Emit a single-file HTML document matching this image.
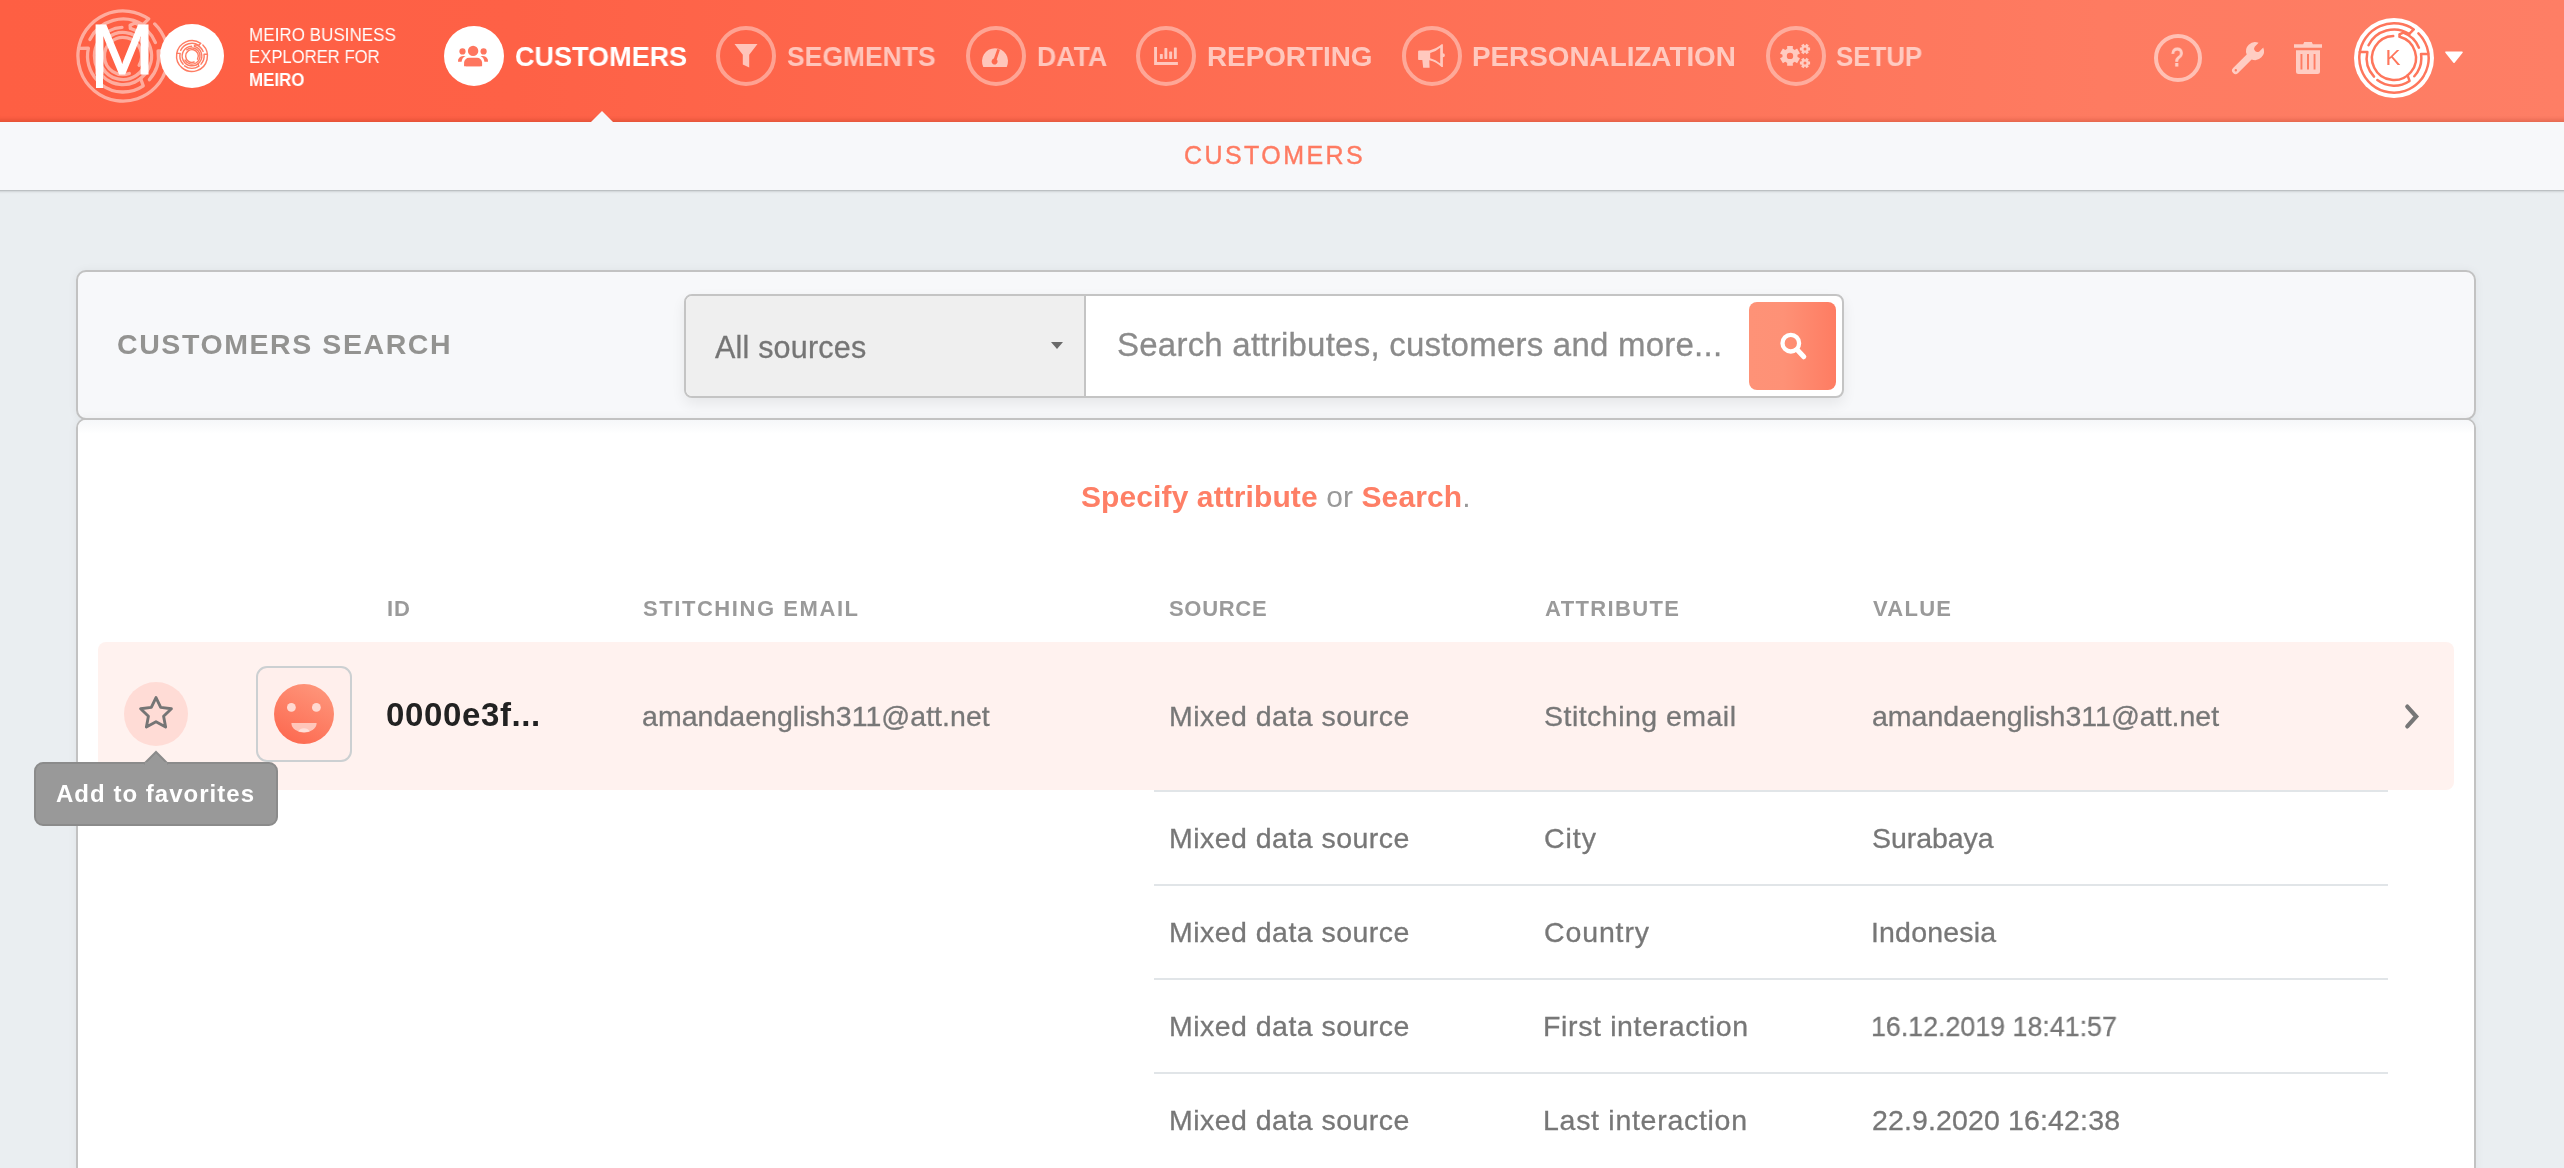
<!DOCTYPE html>
<html lang="en">
<head>
<meta charset="utf-8">
<title>Meiro Business Explorer - Customers</title>
<style>
*{box-sizing:border-box;margin:0;padding:0}
html,body{width:2564px;height:1168px;overflow:hidden}
body{background:#eaeef1;font-family:"Liberation Sans",Arial,sans-serif;color:#777;position:relative}
.abs{position:absolute}
.t{position:absolute;white-space:pre;line-height:1;will-change:transform}
/* header */
#hdr{position:absolute;left:0;top:0;width:2564px;height:122px;background:linear-gradient(90deg,#fe5f43 0%,#fe6146 20%,#fe7b61 82%,#fe7e65 100%);box-shadow:inset 0 -6px 4px -4px rgba(130,30,0,.24)}
#sub{position:absolute;left:-12px;top:122px;width:2588px;height:68px;background:#f7f8fa;box-shadow:0 1px 3px rgba(0,0,0,.2),0 1px 1px rgba(0,0,0,.08)}
.nav{font-weight:700;font-size:27.5px;color:rgba(255,255,255,.62)}
.nav.on{color:#fff}
.sx{transform-origin:0 0}
/* panels */
#sp{position:absolute;left:76px;top:270px;width:2400px;height:150px;background:#f7f8fa;border:2px solid #c2c2c2;border-radius:10px;box-shadow:0 0 10px rgba(0,0,0,.05)}
#rp{position:absolute;left:76px;top:418px;width:2400px;height:800px;background:#fff;border:2px solid #c2c2c2;border-radius:10px;box-shadow:0 0 10px rgba(0,0,0,.05)}
.hd{font-weight:700;font-size:22px;letter-spacing:1.6px;color:#999}
.cell{font-size:28.5px;color:#757575}
.sep{position:absolute;left:1076px;width:1234px;height:2px;background:#e1e5e8}
</style>
</head>
<body>
<div id="sub"><div class="t" style="left:1195.6px;top:20.54px;font-size:25px;letter-spacing:2.42px;color:#fe7b62;-webkit-text-stroke:.4px #fe7b62">CUSTOMERS</div></div>
<header id="hdr">
<!-- logo maze -->
<svg class="abs" style="left:73px;top:6.1px;opacity:.48" width="100" height="100" viewBox="-50 -50 100 100" fill="none" stroke="#fff" stroke-width="3.3" stroke-linecap="round" stroke-linejoin="round">
<path d="M31.72 -32.06 A45.10 45.10 0 1 1 25.67 -37.08 L19.90 -31.24"/>
<path d="M19.90 -31.24 A37.04 37.04 0 0 0 -33.12 -16.59"/>
<path d="M-44.45 -7.67 L-34.63 -7.74 A35.48 35.48 0 0 0 -25.95 24.20"/>
<path d="M44.45 -5.20 L35.10 -5.18 A35.48 35.48 0 0 1 26.41 23.70"/>
<path d="M-21.67 28.75 A36.00 36.00 0 0 0 20.24 29.78 L17.60 22.53"/>
<path d="M32.42 -13.43 A35.09 35.09 0 0 0 12.00 -32.98 L7.08 -30.65 L7.40 -27.62"/>
<path d="M7.40 -27.62 A28.59 28.59 0 1 1 -1.00 -28.58"/>
<path d="M-15.17 -18.08 A23.60 23.60 0 1 1 -20.44 11.80"/>
<path d="M6.36 17.48 A18.60 18.60 0 1 1 16.11 9.30"/>
</svg>
<div class="t sx" style="left:90.2px;top:14.85px;font-size:70px;color:#fff;transform:scaleX(1.1);-webkit-text-stroke:1.2px #fff">M</div>
<div class="abs" style="left:95.8px;top:60px;width:7.6px;height:28.2px;background:#fff"></div>
<div class="abs" style="left:160px;top:24px;width:64px;height:64px;border-radius:50%;background:#fff"></div>
<svg class="abs" style="left:172px;top:36px" width="40" height="40" viewBox="-58.4 -58.4 116.8 116.8" fill="none" stroke="#fe7d64" stroke-width="4.2" stroke-linecap="round" stroke-linejoin="round">
<path d="M31.72 -32.06 A45.10 45.10 0 1 1 25.67 -37.08 L19.90 -31.24"/>
<path d="M19.90 -31.24 A37.04 37.04 0 0 0 -33.12 -16.59"/>
<path d="M-44.45 -7.67 L-34.63 -7.74 A35.48 35.48 0 0 0 -25.95 24.20"/>
<path d="M44.45 -5.20 L35.10 -5.18 A35.48 35.48 0 0 1 26.41 23.70"/>
<path d="M-21.67 28.75 A36.00 36.00 0 0 0 20.24 29.78 L17.60 22.53"/>
<path d="M32.42 -13.43 A35.09 35.09 0 0 0 12.00 -32.98 L7.08 -30.65 L7.40 -27.62"/>
<path d="M7.40 -27.62 A28.59 28.59 0 1 1 -1.00 -28.58"/>
<path d="M-15.17 -18.08 A23.60 23.60 0 1 1 -20.44 11.80"/>
<path d="M6.36 17.48 A18.60 18.60 0 1 1 16.11 9.30"/>
</svg>
<div class="t sx" style="left:249.3px;top:26.4px;font-size:18.3px;color:#fff;transform:scaleX(.933)">MEIRO BUSINESS</div>
<div class="t sx" style="left:249.2px;top:48.4px;font-size:18.3px;color:#fff;transform:scaleX(.912)">EXPLORER FOR</div>
<div class="t sx" style="left:249.4px;top:70.7px;font-size:18.3px;font-weight:700;color:#fff;transform:scaleX(.924)">MEIRO</div>
<!-- nav -->
<svg class="abs" style="left:0;top:0" width="2564" height="122" viewBox="0 0 2564 122">
<g fill="none" stroke="rgba(255,255,255,.4)" stroke-width="4">
<circle cx="746" cy="55.9" r="28"/><circle cx="996" cy="55.9" r="28"/><circle cx="1166" cy="55.9" r="28"/><circle cx="1432" cy="55.9" r="28"/><circle cx="1796" cy="55.9" r="28"/>
</g>
<circle cx="2178" cy="58" r="22" fill="none" stroke="rgba(255,255,255,.52)" stroke-width="4"/>
<circle cx="474" cy="55.9" r="30" fill="#fff"/>
<!-- users -->
<g fill="#fe765f">
<circle cx="473.1" cy="50.9" r="5.2"/>
<path d="M464.1 66.3 V62.6 A5 5 0 0 1 469.1 57.8 H477.1 A5 5 0 0 1 482.1 62.6 V66.3 Z" />
<path d="M464.1 64.3 a2 2 0 0 0 2 2 h14 a2 2 0 0 0 2 -2z"/>
<circle cx="462.5" cy="51.4" r="3.1"/><circle cx="483.6" cy="51.4" r="3.1"/>
<path d="M458 61.8 A5.2 5.2 0 0 1 463 56 H465.6 A7 7 0 0 0 461.6 61.8 Z"/>
<path d="M488 61.8 A5.2 5.2 0 0 0 483 56 H480.4 A7 7 0 0 1 484.4 61.8 Z"/>
</g>
<g fill="rgba(255,255,255,.62)">
<!-- filter -->
<path d="M734.5 44 H757.5 L749.2 54.8 V67.6 L742.8 64.4 V54.8 Z"/>
<!-- tachometer -->
<path fill-rule="evenodd" d="M983.3 66.9 A13 13 0 1 1 1006.7 66.9 Z M997.3 48.9 L993.9 58.6 A3 3 0 1 0 996.7 59.4 L999.9 49.8 Z"/>
<!-- chart -->
<path d="M1154.1 47.1 H1157 V62.1 H1177.9 V65.1 H1154.1 Z"/>
<rect x="1159.9" y="53.9" width="2.9" height="5" rx=".6"/><rect x="1164.4" y="48.1" width="2.9" height="10.8" rx=".6"/><rect x="1169.2" y="51.6" width="2.9" height="7.3" rx=".6"/><rect x="1173.9" y="47.4" width="2.9" height="11.5" rx=".6"/>
<!-- bullhorn -->
<path fill-rule="evenodd" d="M1419.3 50.4 H1429.5 Q1436.5 48.8 1441.6 44.3 H1442.9 V53.2 A1.8 1.8 0 0 1 1442.9 57.2 V67 H1441.6 Q1436.5 61.8 1429.3 60.2 L1429.6 67.8 H1423.2 L1422.3 60.1 H1419.3 A1.2 1.2 0 0 1 1418.1 58.9 V51.6 A1.2 1.2 0 0 1 1419.3 50.4 Z M1430.2 53.1 V58.2 Q1435.8 59.6 1440.2 63.4 V47.7 Q1435.8 51.6 1430.2 53.1 Z"/>
<!-- cogs -->
<path fill-rule="evenodd" d="M1797.52 57.01 L1800.00 58.36 L1797.13 63.33 L1794.72 61.86 L1792.80 62.97 L1792.87 65.79 L1787.13 65.79 L1787.20 62.97 L1785.28 61.86 L1782.87 63.33 L1780.00 58.36 L1782.48 57.01 L1782.48 54.79 L1780.00 53.44 L1782.87 48.47 L1785.28 49.94 L1787.20 48.83 L1787.13 46.01 L1792.87 46.01 L1792.80 48.83 L1794.72 49.94 L1797.13 48.47 L1800.00 53.44 L1797.52 54.79Z M1786.80 55.90 a3.20 3.20 0 1 0 6.40 0 a3.20 3.20 0 1 0 -6.40 0Z"/>
<path fill-rule="evenodd" d="M1808.63 47.56 L1810.09 47.52 L1810.09 50.48 L1808.63 50.44 L1808.06 51.42 L1808.83 52.67 L1806.26 54.15 L1805.57 52.86 L1804.43 52.86 L1803.74 54.15 L1801.17 52.67 L1801.94 51.42 L1801.37 50.44 L1799.91 50.48 L1799.91 47.52 L1801.37 47.56 L1801.94 46.58 L1801.17 45.33 L1803.74 43.85 L1804.43 45.14 L1805.57 45.14 L1806.26 43.85 L1808.83 45.33 L1808.06 46.58Z M1803.50 49.00 a1.50 1.50 0 1 0 3.00 0 a1.50 1.50 0 1 0 -3.00 0Z"/>
<path fill-rule="evenodd" d="M1808.63 61.56 L1810.09 61.52 L1810.09 64.48 L1808.63 64.44 L1808.06 65.42 L1808.83 66.67 L1806.26 68.15 L1805.57 66.86 L1804.43 66.86 L1803.74 68.15 L1801.17 66.67 L1801.94 65.42 L1801.37 64.44 L1799.91 64.48 L1799.91 61.52 L1801.37 61.56 L1801.94 60.58 L1801.17 59.33 L1803.74 57.85 L1804.43 59.14 L1805.57 59.14 L1806.26 57.85 L1808.83 59.33 L1808.06 60.58Z M1803.50 63.00 a1.50 1.50 0 1 0 3.00 0 a1.50 1.50 0 1 0 -3.00 0Z"/>
<!-- wrench -->
<path fill-rule="evenodd" d="M2258.6 42.85 A9 9 0 0 0 2246.7 54.5 L2233.1 68 A3.5 3.5 0 0 0 2238.1 73 L2251.6 59.4 A9 9 0 0 0 2263.25 47.5 L2259.3 51.4 A3.3 3.3 0 0 1 2254.7 46.8 Z M2234.6 70.3 a1.2 1.2 0 1 0 2.4 0 a1.2 1.2 0 1 0 -2.4 0Z"/>
<!-- trash -->
<path fill-rule="evenodd" d="M2294 44.2 H2303.2 L2304.2 42.1 H2311.8 L2312.8 44.2 H2322 V47.7 H2294 Z M2296 50.2 H2320 V71.5 A2.5 2.5 0 0 1 2317.5 74 H2298.5 A2.5 2.5 0 0 1 2296 71.5 Z M2300.5 54 V69.6 H2302.4 V54 Z M2307 54 V69.6 H2309 V54 Z M2313.6 54 V69.6 H2315.5 V54Z"/>
</g>
</svg>
<div class="t nav on sx" id="n1" style="left:514.5px;top:42.7px;transform:scaleX(0.983)">CUSTOMERS</div>
<div class="t nav sx" id="n2" style="left:786.5px;top:42.7px;transform:scaleX(0.963)">SEGMENTS</div>
<div class="t nav sx" id="n3" style="left:1037.0px;top:42.7px;transform:scaleX(0.97)">DATA</div>
<div class="t nav sx" id="n4" style="left:1206.6px;top:42.7px;transform:scaleX(1.012)">REPORTING</div>
<div class="t nav sx" id="n5" style="left:1471.8px;top:42.7px;transform:scaleX(1.012)">PERSONALIZATION</div>
<div class="t nav sx" id="n6" style="left:1835.5px;top:42.7px;transform:scaleX(0.94)">SETUP</div>
<!-- active pointer -->
<div class="abs" style="left:591px;top:111px;width:0;height:0;border-left:11px solid transparent;border-right:11px solid transparent;border-bottom:11px solid #f7f8fa"></div>
<!-- right icons -->
<div class="t" style="left:2165px;top:45px;width:24px;text-align:center;font-size:25.5px;font-weight:400;color:#ffcdc3;-webkit-text-stroke:1px #ffcdc3;transform:scaleX(.86)">?</div>
<div class="abs" style="left:2354px;top:18px;width:80px;height:80px;border-radius:50%;background:#fff"></div>
<svg class="abs" style="left:2354px;top:18px" width="80" height="80" viewBox="-40 -40 80 80" fill="none" stroke="#fe765c" stroke-width="2.5" stroke-linecap="round" stroke-linejoin="round">
<path d="M24.41 -24.66 A34.7 34.7 0 1 1 19.75 -28.53 L15.31 -24.04"/>
<path d="M15.31 -24.04 A28.5 28.5 0 0 0 -25.48 -12.76"/>
<path d="M-34.2 -5.9 L-26.64 -5.96 A27.3 27.3 0 0 0 -19.97 18.62"/>
<path d="M34.2 -4 L27.01 -3.99 A27.3 27.3 0 0 1 20.32 18.23"/>
<path d="M-16.67 22.12 A27.7 27.7 0 0 0 15.57 22.91 L13.54 17.34"/>
<path d="M24.94 -10.33 A27 27 0 0 0 9.23 -25.37 L5.44 -23.58 L5.69 -21.25"/>
<path d="M5.69 -21.25 A22 22 0 1 1 -0.77 -21.99"/>
</svg>
<div class="t" style="left:2380.8px;top:47.2px;width:24px;text-align:center;font-size:22.5px;color:#fe765c">K</div>
<svg class="abs" style="left:2444px;top:51px" width="20" height="13" viewBox="0 0 20 13"><path d="M2 1.2 H18 L10 11.2 Z" fill="#fff" stroke="#fff" stroke-width="1.6" stroke-linejoin="round"/></svg>
</header>
<section id="sp">
<div class="t" style="left:39px;top:58.3px;font-size:28.5px;font-weight:700;letter-spacing:1.58px;color:#939391">CUSTOMERS SEARCH</div>
<div class="abs" id="sbox" style="left:606px;top:22px;width:1160px;height:104px;border:2px solid #c4c4c4;border-radius:8px;background:#fff;box-shadow:0 6px 14px rgba(0,0,0,.07);overflow:hidden">
<div class="abs" style="left:0;top:0;width:400.4px;height:100px;background:#efefef;border-right:2px solid #c4c4c4"></div>
<div class="t" style="left:29px;top:36.08px;font-size:30.5px;letter-spacing:.2px;color:#757575;-webkit-text-stroke:.3px #757575">All sources</div>
<div class="abs" style="left:364.5px;top:46.4px;width:0;height:0;border-left:6.6px solid transparent;border-right:6.6px solid transparent;border-top:7.6px solid #6a6a6a"></div>
<div class="t" style="left:431.4px;top:32.27px;font-size:33px;letter-spacing:.23px;color:#8b8b8b;-webkit-text-stroke:.3px #8b8b8b">Search attributes, customers and more...</div>
<div class="abs" style="left:1062.5px;top:6px;width:87.5px;height:87.5px;border-radius:8px;background:linear-gradient(90deg,#fe9277,#fe9176 40%,#fe7c62)"></div>
<svg class="abs" style="left:1091.5px;top:35px" width="30" height="30" viewBox="0 0 30 30" fill="none" stroke="#fff" stroke-width="4.3"><circle cx="12.8" cy="12.2" r="8.3"/><path d="M19.2 18.8 L25.8 25.8" stroke-width="5" stroke-linecap="round"/></svg>
</div>
</section>
<main id="rp">
<div class="abs" style="left:0;top:0;width:2396px;height:14px;background:linear-gradient(#f6f7f9,#fff);border-radius:8px 8px 0 0"></div>
<div class="t" style="left:1003px;top:62.3px;font-size:30px;letter-spacing:.1px;color:#999"><b style="color:#fe7f66">Specify attribute</b> or <b style="color:#fe7f66">Search</b>.</div>
<!-- row highlight -->
<div class="abs" style="left:20px;top:222px;width:2356px;height:148px;border-radius:8px;background:#fff2ef"></div>
<!-- separators -->
<div class="sep" style="top:370px"></div><div class="sep" style="top:464px"></div><div class="sep" style="top:558px"></div><div class="sep" style="top:652px"></div>
<!-- star -->
<div class="abs" style="left:46px;top:261.5px;width:64px;height:64px;border-radius:50%;background:#ffdcd6"></div>
<svg class="abs" style="left:58px;top:273.5px" width="40" height="40" viewBox="-20 -20 40 40"><path fill="none" stroke="#757575" stroke-width="2.9" stroke-linejoin="round" d="M0 -16.4 L4.7 -6.6 L15.4 -5.2 L7.6 2.3 L9.6 13 L0 7.8 L-9.6 13 L-7.6 2.3 L-15.4 -5.2 L-4.7 -6.6 Z"/></svg>
<!-- avatar -->
<div class="abs" style="left:178px;top:246px;width:96px;height:96px;border-radius:11px;border:2px solid #ccd0d2;background:#ffefec"></div>
<svg class="abs" style="left:194px;top:261.79999999999995px" width="64" height="64" viewBox="-32 -32 64 64">
<defs><linearGradient id="fg" x1=".75" y1="0" x2=".25" y2="1"><stop offset="0" stop-color="#fe967b"/><stop offset="1" stop-color="#fd6950"/></linearGradient></defs>
<circle r="30" fill="url(#fg)"/>
<circle cx="-12.6" cy="-6.6" r="4.4" fill="#ffd9d1"/><circle cx="12.4" cy="-6.6" r="4.4" fill="#ffd9d1"/>
<path d="M-12.6 9 H12.6 A12.6 9.6 0 0 1 -12.6 9 Z" fill="#ffc6ba"/>
<path d="M-5.6 17.2 A6 4.6 0 0 1 5.6 17.2 A12.6 9.6 0 0 1 -5.6 17.2 Z" fill="#ffe0d9"/>
</svg>
<div class="t" style="left:309px;top:177.58px;font-size:22px;font-weight:700;letter-spacing:1.0px;color:#9a9a9a">ID</div>
<div class="t" style="left:565px;top:177.58px;font-size:22px;font-weight:700;letter-spacing:1.564px;color:#9a9a9a">STITCHING EMAIL</div>
<div class="t" style="left:1091px;top:177.58px;font-size:22px;font-weight:700;letter-spacing:0.695px;color:#9a9a9a">SOURCE</div>
<div class="t" style="left:1467px;top:177.58px;font-size:22px;font-weight:700;letter-spacing:1.371px;color:#9a9a9a">ATTRIBUTE</div>
<div class="t" style="left:1795px;top:177.58px;font-size:22px;font-weight:700;letter-spacing:1.266px;color:#9a9a9a">VALUE</div>
<div class="t" style="left:308.2px;top:277.67px;font-size:33px;font-weight:700;letter-spacing:0.63px;color:#222">0000e3f...</div>
<div class="t" style="left:564.2px;top:282.07px;font-size:28.5px;font-weight:400;letter-spacing:0.034px;color:#777;-webkit-text-stroke:.3px #777">amandaenglish311@att.net</div>
<div class="t" style="left:1090.90px;top:282.07px;font-size:28.5px;font-weight:400;letter-spacing:0.471px;color:#777;-webkit-text-stroke:.3px #777">Mixed data source</div>
<div class="t" style="left:1466.00px;top:282.07px;font-size:28.5px;font-weight:400;letter-spacing:0.476px;color:#777;-webkit-text-stroke:.3px #777">Stitching email</div>
<div class="t" style="left:1794.3px;top:282.07px;font-size:28.5px;font-weight:400;letter-spacing:0.011px;color:#777;-webkit-text-stroke:.3px #777">amandaenglish311@att.net</div>
<div class="t" style="left:1090.90px;top:404.47px;font-size:28.5px;font-weight:400;letter-spacing:0.471px;color:#777;-webkit-text-stroke:.3px #777">Mixed data source</div>
<div class="t" style="left:1465.50px;top:404.47px;font-size:28.5px;font-weight:400;letter-spacing:0.968px;color:#777;-webkit-text-stroke:.3px #777">City</div>
<div class="t" style="left:1793.50px;top:404.47px;font-size:28.5px;font-weight:400;letter-spacing:-0.074px;color:#777;-webkit-text-stroke:.3px #777">Surabaya</div>
<div class="t" style="left:1090.90px;top:498.47px;font-size:28.5px;font-weight:400;letter-spacing:0.471px;color:#777;-webkit-text-stroke:.3px #777">Mixed data source</div>
<div class="t" style="left:1465.50px;top:498.47px;font-size:28.5px;font-weight:400;letter-spacing:0.868px;color:#777;-webkit-text-stroke:.3px #777">Country</div>
<div class="t" style="left:1792.50px;top:498.47px;font-size:28.5px;font-weight:400;letter-spacing:0.174px;color:#777;-webkit-text-stroke:.3px #777">Indonesia</div>
<div class="t" style="left:1090.90px;top:592.47px;font-size:28.5px;font-weight:400;letter-spacing:0.471px;color:#777;-webkit-text-stroke:.3px #777">Mixed data source</div>
<div class="t" style="left:1464.50px;top:592.47px;font-size:28.5px;font-weight:400;letter-spacing:0.637px;color:#777;-webkit-text-stroke:.3px #777">First interaction</div>
<div class="t sx" style="left:1793px;top:592.47px;font-size:28.5px;font-weight:400;letter-spacing:0;transform:scaleX(.94);color:#777;-webkit-text-stroke:.3px #777">16.12.2019 18:41:57</div>
<div class="t" style="left:1090.90px;top:686.47px;font-size:28.5px;font-weight:400;letter-spacing:0.471px;color:#777;-webkit-text-stroke:.3px #777">Mixed data source</div>
<div class="t" style="left:1464.50px;top:686.47px;font-size:28.5px;font-weight:400;letter-spacing:0.715px;color:#777;-webkit-text-stroke:.3px #777">Last interaction</div>
<div class="t" style="left:1793.50px;top:686.47px;font-size:28.5px;font-weight:400;letter-spacing:0.138px;color:#777;-webkit-text-stroke:.3px #777">22.9.2020 16:42:38</div>
<svg class="abs" style="left:2323px;top:281.5px" width="20" height="30" viewBox="0 0 20 30"><path d="M6.3 4.6 L15.2 14.5 L6.3 24.4" fill="none" stroke="#777" stroke-width="4.2" stroke-linecap="round" stroke-linejoin="miter"/></svg>
</main>
<!-- tooltip -->
<div class="abs" style="left:34px;top:762px;width:244px;height:64px;border-radius:9px;background:#999;border:2px solid #8b8b8b"></div>
<svg class="abs" style="left:142px;top:750px" width="28" height="15" viewBox="0 0 28 15"><path d="M2 14 L14 2 L26 14" fill="#999" stroke="#8b8b8b" stroke-width="2"/><rect x="3" y="12.2" width="22" height="3" fill="#999"/></svg>
<div class="t" style="left:55.5px;top:782.08px;font-size:24px;font-weight:700;letter-spacing:1.02px;color:#fff">Add to favorites</div>

</body>
</html>
